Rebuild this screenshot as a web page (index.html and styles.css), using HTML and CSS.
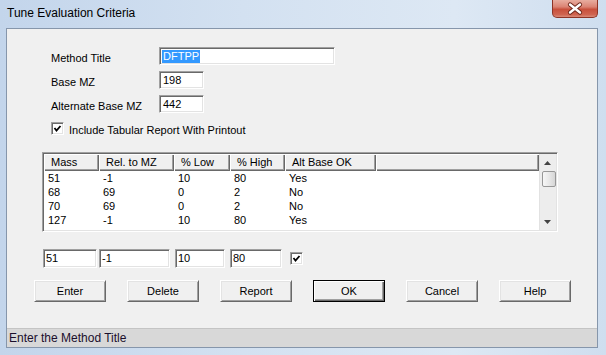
FILE: index.html
```html
<!DOCTYPE html>
<html>
<head>
<meta charset="utf-8">
<link rel="stylesheet" href="styles.css">
</head>
<body>
<div class="window">
  <div class="titlebar">
    <span class="title">Tune Evaluation Criteria</span>
    <div class="close">
      <svg width="46" height="18" viewBox="0 0 46 18">
        <path d="M18 4.5 L28 12.5 M28 4.5 L18 12.5" stroke="#6a2418" stroke-width="4.2" stroke-linecap="round" fill="none"/>
        <path d="M18 4.5 L28 12.5 M28 4.5 L18 12.5" stroke="#ffffff" stroke-width="2.4" stroke-linecap="round" fill="none"/>
      </svg>
    </div>
  </div>
  <div class="client">
    <div class="content">
      <div class="form">
        <div class="field"><span class="label">Method Title</span><div class="input w-title"><span class="sel">DFTPP</span></div></div>
        <div class="field"><span class="label">Base MZ</span><div class="input w-mz">198</div></div>
        <div class="field"><span class="label">Alternate Base MZ</span><div class="input w-mz">442</div></div>
        <div class="check-row">
          <span class="checkbox"><svg width="9" height="9" viewBox="0 0 9 9"><path d="M1.5 4 L3.5 6.5 L7.5 2" stroke="#000" stroke-width="1.8" fill="none"/></svg></span>
          <span>Include Tabular Report With Printout</span>
        </div>
      </div>
      <div class="listview">
        <div class="lv-main">
          <div class="lv-header">
            <div class="hcell">Mass</div>
            <div class="hcell">Rel. to MZ</div>
            <div class="hcell">% Low</div>
            <div class="hcell">% High</div>
            <div class="hcell">Alt Base OK</div>
            <div class="hcell"></div>
          </div>
          <div class="lv-row"><span>51</span><span>-1</span><span>10</span><span>80</span><span>Yes</span></div>
          <div class="lv-row"><span>68</span><span>69</span><span>0</span><span>2</span><span>No</span></div>
          <div class="lv-row"><span>70</span><span>69</span><span>0</span><span>2</span><span>No</span></div>
          <div class="lv-row"><span>127</span><span>-1</span><span>10</span><span>80</span><span>Yes</span></div>
        </div>
        <div class="scrollbar">
          <div class="sb-btn"><svg width="7" height="4" viewBox="0 0 7 4"><path d="M0 4 L3.5 0 L7 4 Z" fill="#444"/></svg></div>
          <div class="sb-thumb"></div>
          <div class="sb-track"></div>
          <div class="sb-btn"><svg width="7" height="4" viewBox="0 0 7 4"><path d="M0 0 L3.5 4 L7 0 Z" fill="#444"/></svg></div>
        </div>
      </div>
      <div class="entry-row">
        <div class="input e1">51</div>
        <div class="input e2">-1</div>
        <div class="input e3">10</div>
        <div class="input e4">80</div>
        <span class="checkbox e-check"><svg width="9" height="9" viewBox="0 0 9 9"><path d="M1.5 4 L3.5 6.5 L7.5 2" stroke="#000" stroke-width="1.8" fill="none"/></svg></span>
      </div>
      <div class="buttons">
        <div class="btn">Enter</div>
        <div class="btn">Delete</div>
        <div class="btn">Report</div>
        <div class="btn default">OK</div>
        <div class="btn">Cancel</div>
        <div class="btn">Help</div>
      </div>
    </div>
    <div class="status">Enter the Method Title</div>
  </div>
</div>
</body>
</html>
```
FILE: styles.css
```css
html, body {
  margin: 0;
  padding: 0;
  background: #ffffff;
}

.window {
  width: 606px;
  height: 355px;
  box-sizing: border-box;
  padding: 0 8px 7px 6px;
  display: flex;
  flex-direction: column;
  background: linear-gradient(90deg, #c3d5eb 0%, #d3e1f1 40%, #dde8f4 75%, #cfdeef 100%);
  font-family: "Liberation Sans", Arial, sans-serif;
  font-size: 11px;
  color: #000;
}

.titlebar {
  height: 28px;
  flex: none;
  display: flex;
  justify-content: space-between;
  align-items: flex-start;
}

.title {
  font-size: 12px;
  line-height: 15px;
  padding: 6px 0 0 1px;
  color: #000;
}

.close {
  width: 46px;
  height: 18px;
  box-sizing: border-box;
  border: 1px solid #8d3426;
  border-top: none;
  border-radius: 0 0 5px 5px;
  background: linear-gradient(180deg, #e8ad9f 0%, #db8474 40%, #c8503c 55%, #cf6450 85%, #d98a78 100%);
  display: flex;
  align-items: center;
  justify-content: center;
  overflow: hidden;
}

.close svg {
  display: block;
  flex: none;
}

.client {
  flex: 1;
  border: 1px solid #8696ab;
  background: #f0f0f0;
  display: flex;
  flex-direction: column;
}

.content {
  flex: 1;
}

.form {
  padding: 18px 0 0 44px;
}

.field {
  display: flex;
  align-items: center;
  height: 18px;
  margin-bottom: 6px;
}

.label {
  width: 108px;
  flex: none;
  padding-top: 4px;
}

.input {
  box-sizing: border-box;
  height: 18px;
  background: #fff;
  border-top: 1px solid #a0a0a0;
  border-left: 1px solid #a0a0a0;
  border-right: 1px solid #ffffff;
  border-bottom: 1px solid #ffffff;
  box-shadow: inset 1px 1px 0 #696969, inset -1px -1px 0 #e3e3e3;
  padding: 0 0 0 3px;
  line-height: 16px;
  white-space: nowrap;
}

.w-title { width: 176px; }
.w-mz { width: 45px; }

.sel {
  background: #3399ff;
  color: #fff;
  padding: 0 1px;
  margin-left: -1px;
  display: inline-block;
  line-height: 13px;
}

.check-row {
  display: flex;
  align-items: center;
  height: 13px;
  margin-top: 9px;
  gap: 5px;
}

.check-row span:last-child {
  padding-top: 2px;
}

.checkbox {
  width: 13px;
  height: 13px;
  box-sizing: border-box;
  background: #fff;
  border-top: 1px solid #a0a0a0;
  border-left: 1px solid #a0a0a0;
  border-right: 1px solid #fff;
  border-bottom: 1px solid #fff;
  box-shadow: inset 1px 1px 0 #696969, inset -1px -1px 0 #e3e3e3;
  display: flex;
  align-items: center;
  justify-content: center;
  flex: none;
}

.checkbox svg {
  display: block;
}

.listview {
  margin: 17px 0 0 35px;
  width: 516px;
  height: 80px;
  box-sizing: border-box;
  background: #fff;
  border-top: 1px solid #a0a0a0;
  border-left: 1px solid #a0a0a0;
  border-right: 1px solid #fff;
  border-bottom: 1px solid #fff;
  box-shadow: inset 1px 1px 0 #696969, inset -1px -1px 0 #e3e3e3;
  padding: 1px;
  display: flex;
}

.lv-main {
  flex: 1;
  overflow: hidden;
}

.lv-header {
  display: grid;
  grid-template-columns: 55px 75px 56px 55px 91px 1fr;
  height: 17px;
}

.hcell {
  box-sizing: border-box;
  background: #f0f0f0;
  box-shadow: inset 1px 1px 0 #ffffff, inset -1px -1px 0 #696969, inset -2px -2px 0 #a0a0a0;
  padding-left: 7px;
  line-height: 17px;
  white-space: nowrap;
}

.lv-row {
  display: grid;
  grid-template-columns: 55px 75px 56px 55px 91px 1fr;
  height: 14px;
  line-height: 14px;
}

.lv-row span {
  padding-left: 4px;
}

.scrollbar {
  width: 17px;
  flex: none;
  display: flex;
  flex-direction: column;
  align-items: center;
  background: #ededed;
  box-shadow: inset 1px 0 0 #e2e2e2;
}

.sb-btn {
  height: 17px;
  width: 17px;
  display: flex;
  align-items: center;
  justify-content: center;
  flex: none;
}

.sb-thumb {
  width: 14px;
  height: 16px;
  box-sizing: border-box;
  margin-left: 2px;
  border: 1px solid #979797;
  border-radius: 2px;
  background: linear-gradient(90deg, #f6f6f6 0%, #e8e8e8 50%, #d6d6d6 100%);
  flex: none;
}

.sb-track {
  flex: 1;
}

.entry-row {
  margin: 17px 0 0 36px;
  display: flex;
  align-items: center;
  height: 19px;
}

.entry-row .input {
  height: 19px;
  line-height: 17px;
  padding-left: 2px;
}

.e1 { width: 54px; }
.e2 { width: 71px; margin-left: 2px; }
.e3 { width: 50px; margin-left: 5px; }
.e4 { width: 52px; margin-left: 5px; }
.e-check { margin-left: 8px; }

.buttons {
  margin: 12px 0 0 27px;
  display: flex;
  gap: 21px;
}

.btn {
  width: 72px;
  height: 22px;
  box-sizing: border-box;
  background: #f0f0f0;
  border-top: 1px solid #ffffff;
  border-left: 1px solid #ffffff;
  border-right: 1px solid #696969;
  border-bottom: 1px solid #696969;
  box-shadow: inset 1px 1px 0 #e3e3e3, inset -1px -1px 0 #a0a0a0;
  text-align: center;
  line-height: 20px;
}

.btn.default {
  border: 1px solid #000;
  box-shadow: inset 1px 1px 0 #ffffff, inset -1px -1px 0 #696969, inset -2px -2px 0 #a0a0a0;
}

.status {
  height: 18px;
  flex: none;
  border-top: 1px solid #c4c4c4;
  background: #d8d8d8;
  font-size: 12px;
  line-height: 18px;
  padding-left: 2px;
  color: #1b0f2c;
}
```
